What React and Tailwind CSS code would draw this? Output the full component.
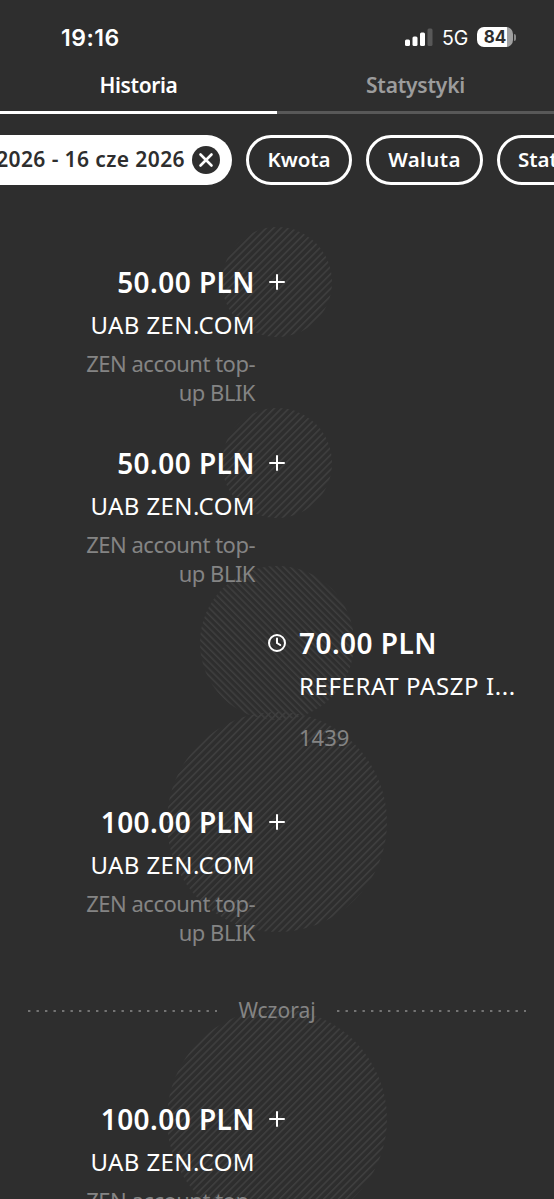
import { Plus } from "lucide-react";

const transactions = [
  { id: 1, type: "in", amount: "50.00 PLN", name: "UAB ZEN.COM", note: "ZEN account top-up BLIK", size: 110 },
  { id: 2, type: "in", amount: "50.00 PLN", name: "UAB ZEN.COM", note: "ZEN account top-up BLIK", size: 110 },
  { id: 3, type: "pending", amount: "70.00 PLN", name: "REFERAT PASZP I...", note: "1439", size: 154 },
  { id: 4, type: "in", amount: "100.00 PLN", name: "UAB ZEN.COM", note: "ZEN account top-up BLIK", size: 220 },
];

const yesterday = [
  { id: 5, type: "in", amount: "100.00 PLN", name: "UAB ZEN.COM", note: "ZEN account top-up BLIK", size: 220 },
];

function StatusBar() {
  return (
    <div className="flex h-[66px] shrink-0 items-start justify-between pt-[22px] pl-[61px] pr-[38px]">
      <span className="font-['Inter'] text-[23px] font-semibold leading-[32px] tracking-[0.5px]">19:16</span>
      <div className="flex h-[30px] items-center">
        <svg width="28" height="18" viewBox="0 0 28 18" fill="#fff">
          <rect x="0" y="11.5" width="5" height="6.5" rx="1.5" />
          <rect x="7.5" y="8.5" width="5" height="9.5" rx="1.5" />
          <rect x="15" y="4.5" width="5" height="13.5" rx="1.5" />
          <rect x="22.5" y="0.5" width="5" height="17.5" rx="1.5" fill="#585858" />
        </svg>
        <span className="ml-[9px] w-[27px] pt-[3px] font-['Inter'] text-[19.5px] leading-none">5G</span>
        <div className="ml-2 flex h-5 w-9 items-center justify-center rounded-[7px] bg-linear-to-r from-white from-84% to-[#a0a0a0] to-84% font-['Inter'] text-[17px] font-bold leading-none text-[#2e2e2e]">
          84
        </div>
        <div className="ml-px h-[7px] w-[2px] rounded-r-full bg-[#8a8a8a]" />
      </div>
    </div>
  );
}

function Tabs() {
  return (
    <div className="grid h-[48px] shrink-0 grid-cols-2 text-center text-[21px] font-semibold leading-[38px]">
      <div className="border-b-[3px] border-white">
        <span className="tracking-[-0.4px]">Historia</span>
      </div>
      <div className="border-b-[3px] border-[#585858] text-[#9c9c9c]">
        <span className="tracking-[-0.2px]">Statystyki</span>
      </div>
    </div>
  );
}

function Filters() {
  return (
    <div className="mt-[21px] flex h-[50px] shrink-0 gap-[14px] overflow-hidden text-[20.5px] font-semibold">
      <div className="flex w-[232px] shrink-0 items-center justify-end gap-[7px] rounded-r-full bg-white pr-3 text-[#2e2e2e]">
        <span className="whitespace-nowrap text-[21px] tracking-[0.4px]">2026 - 16 cze 2026</span>
        <svg width="28" height="28" viewBox="0 0 28 28" className="shrink-0">
          <circle cx="14" cy="14" r="14" fill="#2e2e2e" />
          <path d="M8.5 8.5l11 11M19.5 8.5l-11 11" stroke="#fff" strokeWidth="2.6" strokeLinecap="round" />
        </svg>
      </div>
      <div className="flex w-[106px] shrink-0 items-center justify-center rounded-full border-[3px] border-white pb-0.5">
        Kwota
      </div>
      <div className="flex w-[117px] shrink-0 items-center justify-center rounded-full border-[3px] border-white pb-0.5 tracking-[0.4px]">
        Waluta
      </div>
      <div className="flex w-[117px] shrink-0 items-center rounded-full border-[3px] border-white pb-0.5 pl-[18px]">
        Status
      </div>
    </div>
  );
}

function Bubble({ id, size, flip }) {
  const step = flip ? 4.8 : 5.2;

  return (
    <svg
      width={size}
      height={size}
      className="absolute left-1/2 top-5 -translate-x-1/2 -translate-y-1/2"
    >
      <defs>
        <pattern
          id={`stripes-${id}`}
          width={step}
          height={step}
          patternUnits="userSpaceOnUse"
          patternTransform={flip ? "rotate(-45)" : "rotate(45)"}
        >
          <rect width="1.5" height={step} fill="#3f3f3f" />
        </pattern>
      </defs>
      <circle cx={size / 2} cy={size / 2} r={size / 2} fill={`url(#stripes-${id})`} />
    </svg>
  );
}

function Transaction({ item }) {
  const incoming = item.type === "in";

  return (
    <div className={`relative shrink-0 ${incoming ? "h-[180px] first:h-[181px]" : "h-[179px]"}`}>
      <Bubble id={item.id} size={item.size} flip={!incoming} />
      {/* text stays above the bubbles of the neighbouring rows */}
      <div className="relative z-10 grid grid-cols-[255px_44px_1fr]">
        <div className={incoming ? "col-start-1 row-start-1 text-right" : "col-start-3 row-start-1"}>
          <div className="h-10 text-[28px] font-semibold leading-10 tracking-[0.45px]">{item.amount}</div>
          <div
            className={`mt-[7px] h-8 whitespace-nowrap text-[24px] leading-8 ${
              incoming ? "tracking-[0.4px]" : "tracking-[0.6px]"
            }`}
          >
            {item.name}
          </div>
          <div
            className={`mt-2 flex items-center text-[22px] leading-[29px] text-[#848484] ${
              incoming ? "ml-auto h-[58px] w-[175px] justify-end tracking-[-0.5px]" : "h-[55px]"
            }`}
          >
            <span>{item.note}</span>
          </div>
        </div>
        <div className="col-start-2 row-start-1 flex h-10 items-center justify-center">
          {incoming ? (
            <Plus size={24} strokeWidth={2} />
          ) : (
            <svg width="18" height="18" viewBox="0 0 18 18" fill="none" stroke="#fff" strokeWidth="2" strokeLinecap="round">
              <circle cx="9" cy="9" r="8" />
              <path d="M9 4.5V9l3.2 2" />
            </svg>
          )}
        </div>
      </div>
    </div>
  );
}

function Dots() {
  return (
    <svg width="189" height="2" viewBox="0 0 189 2">
      <path d="M0 1h189" stroke="#747474" strokeWidth="2" strokeDasharray="2.4 6.1" />
    </svg>
  );
}

export default function App() {
  return (
    <main className="flex h-[1199px] w-[554px] flex-col overflow-hidden bg-[#2e2e2e] font-['Noto_Sans',sans-serif] text-white">
      <StatusBar />
      <Tabs />
      <Filters />

      <section className="mt-[77px] flex shrink-0 flex-col">
        {transactions.map((item) => (
          <Transaction key={item.id} item={item} />
        ))}
      </section>

      <div className="relative z-10 mt-[13px] flex h-8 shrink-0 items-center justify-between px-7 text-[21px] text-[#848484]">
        <Dots />
        <span>Wczoraj</span>
        <Dots />
      </div>

      <section className="mt-[72px] flex shrink-0 flex-col">
        {yesterday.map((item) => (
          <Transaction key={item.id} item={item} />
        ))}
      </section>
    </main>
  );
}
